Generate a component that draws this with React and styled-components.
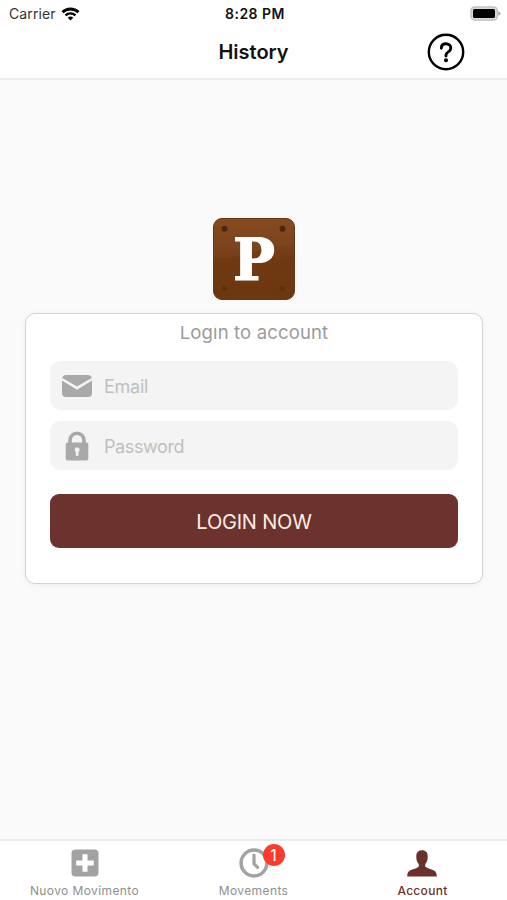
import styled, {createGlobalStyle} from 'styled-components';

const tabs = [
  {label: 'Nuovo Movimento', icon: 'plus'},
  {label: 'Movements', icon: 'clock', badge: 1},
  {label: 'Account', icon: 'person', active: true},
];

const WifiIcon = () => (
  <svg width="19" height="14" viewBox="0 0 18 14" fill="none">
    <path d="M1 5.2A11.6 11.6 0 0 1 17 5.2" stroke="#000" strokeWidth="2.8" />
    <path d="M4 8.4A7.3 7.3 0 0 1 14 8.4" stroke="#000" strokeWidth="2.3" />
    <path d="M6.2 10.8A4 4 0 0 1 11.8 10.8L9 13.6Z" fill="#000" />
  </svg>
);

const BatteryIcon = () => (
  <svg width="31" height="15" viewBox="0 0 31 15">
    <rect x="1" y="1" width="26.4" height="13" rx="4" fill="#ddd" stroke="#c2c2c2" strokeWidth="1.6" />
    <rect x="3" y="3" width="22" height="9" rx="1.6" fill="#000" />
    <path d="M28.3 5.2Q30.6 6 30.6 7.5T28.3 9.8Z" fill="#aaa" />
  </svg>
);

const HelpIcon = () => (
  <svg width="38" height="38" viewBox="0 0 38 38" fill="none">
    <circle cx="19" cy="19" r="17.2" stroke="#000" strokeWidth="2.4" />
    <path
      d="M14.3 15.2C14.3 12.3 16.3 10.8 19 10.8C21.9 10.8 23.8 12.6 23.8 15C23.8 17 22.8 17.9 21.3 18.9C19.7 20 19 20.7 19 22.1V23"
      stroke="#000"
      strokeWidth="2.9"
      strokeLinecap="round"
    />
    <circle cx="19" cy="27.3" r="2" fill="#000" />
  </svg>
);

const Logo = () => (
  <svg width="82" height="82" viewBox="0 0 82 82">
    <defs>
      <linearGradient id="wood" x1="0" y1="0" x2="0" y2="1">
        <stop offset="0" stopColor="#84481d" />
        <stop offset="0.35" stopColor="#77401b" />
        <stop offset="0.5" stopColor="#703911" />
        <stop offset="1" stopColor="#6c370f" />
      </linearGradient>
    </defs>
    <rect x="0.5" y="0.5" width="81" height="81" rx="8.5" fill="url(#wood)" stroke="#643613" />
    <path d="M1 40Q25 40 42 34T81 26V9Q81 1 73 1H9Q1 1 1 9Z" fill="#94582a" opacity="0.18" />
    <circle cx="11.5" cy="10.8" r="3" fill="#4c270d" />
    <circle cx="69.5" cy="10.8" r="3" fill="#4c270d" />
    <circle cx="11.5" cy="70.5" r="2.6" fill="#5e300e" />
    <circle cx="69.5" cy="70.5" r="2.6" fill="#5e300e" />
    <LogoLetter x="20" y="61.5" textLength="42" lengthAdjust="spacingAndGlyphs">
      P
    </LogoLetter>
  </svg>
);

const MailIcon = () => (
  <svg width="30" height="22" viewBox="0 0 30 22">
    <path d="M4 0H26Q29 0 29.7 2.6V3L15 11.4L0.3 3V2.6Q1 0 4 0Z" fill="#a9a9a9" />
    <path d="M0 5.6L15 14.8L30 5.6V18Q30 22 26 22H4Q0 22 0 18Z" fill="#a9a9a9" />
  </svg>
);

const LockIcon = () => (
  <svg width="24" height="30" viewBox="0 0 24 30">
    <path d="M5 14V9.3A7 7 0 0 1 19 9.3V14" fill="none" stroke="#a9a9a9" strokeWidth="3.6" />
    <rect x="0.7" y="11.4" width="22.6" height="18" rx="2" fill="#a9a9a9" />
    <path d="M12 16.2A2.7 2.7 0 0 1 13.5 21.1V24.7H10.8V21.1A2.7 2.7 0 0 1 12 16.2Z" fill="#f4f4f4" />
  </svg>
);

const PlusIcon = () => (
  <svg width="28" height="28" viewBox="0 0 28 28">
    <rect x="0.5" y="0.5" width="27" height="27" rx="4" fill="#a2a2a2" />
    <path d="M14 5.2V22.8M5.2 14H22.8" stroke="#fff" strokeWidth="5" />
  </svg>
);

const ClockIcon = () => (
  <svg width="30" height="30" viewBox="0 0 30 30" fill="none">
    <circle cx="15" cy="15" r="12.9" stroke="#a2a2a2" strokeWidth="3.5" />
    <path d="M15 7.2V15.8L18.6 19.4" stroke="#a2a2a2" strokeWidth="3.2" strokeLinecap="round" strokeLinejoin="round" />
  </svg>
);

const PersonIcon = () => (
  <svg width="31" height="27" viewBox="0 0 31 27">
    <path
      d="M15 0.3C18.8 0.3 20.9 2.8 20.7 6.4C20.9 9.8 19.8 12.2 18.2 14V16.4C20 18.6 24.2 18.9 27 20.5C29 21.8 29.8 23.4 29.8 26.5H0.2C0.2 23.4 1 21.8 3 20.5C5.8 18.9 10 18.6 11.8 16.4V14C10.2 12.2 9.1 9.8 9.3 6.4C9.1 2.8 11.2 0.3 15 0.3Z"
      fill="#6c302c"
    />
  </svg>
);

const icons = {plus: PlusIcon, clock: ClockIcon, person: PersonIcon};

const TabItem = ({label, icon, badge, active}) => {
  const Icon = icons[icon];

  return (
    <Tab>
      <TabIcon>
        <Icon />
        {badge && <Badge>{badge}</Badge>}
      </TabIcon>
      <TabLabel $active={active}>{label}</TabLabel>
    </Tab>
  );
};

const App = () => {
  return (
    <>
      <GlobalStyle />
      <Screen>
        <StatusBar>
          <Carrier>
            Carrier
            <WifiIcon />
          </Carrier>
          <Time>8:28 PM</Time>
          <Battery>
            <BatteryIcon />
          </Battery>
        </StatusBar>
        <Header>
          <Title>History</Title>
          <HelpButton aria-label="Help">
            <HelpIcon />
          </HelpButton>
        </Header>
        <Content>
          <Logo />
          <LoginCard>
            <CardTitle>Login to account</CardTitle>
            <Field>
              <FieldIcon>
                <MailIcon />
              </FieldIcon>
              <Input type="email" placeholder="Email" $spacing="-0.25px" />
            </Field>
            <Field>
              <FieldIcon>
                <LockIcon />
              </FieldIcon>
              <Input type="password" placeholder="Password" $spacing="-0.4px" />
            </Field>
            <LoginButton>LOGIN NOW</LoginButton>
          </LoginCard>
        </Content>
        <TabBar>
          {tabs.map((tab) => (
            <TabItem key={tab.label} {...tab} />
          ))}
        </TabBar>
      </Screen>
    </>
  );
};

const GlobalStyle = createGlobalStyle`
  * {
    box-sizing: border-box;
  }

  body {
    margin: 0;
    font-family: Inter, 'Liberation Sans', sans-serif;
  }

  h1, h2 {
    margin: 0;
  }

  button {
    padding: 0;
    border: none;
    background: none;
    font-family: inherit;
  }

  svg {
    display: block;
    flex-shrink: 0;
  }
`;

const Screen = styled.div`
  display: flex;
  flex-direction: column;
  height: 900px;
  background-color: #fafafa;
`;

const StatusBar = styled.div`
  display: grid;
  grid-template-columns: 1fr auto 1fr;
  align-items: center;
  height: 27px;
  padding: 0 6px 0 9px;
  background-color: #fff;
`;

const Carrier = styled.div`
  display: flex;
  align-items: center;
  gap: 5px;
  font-size: 14px;
  letter-spacing: 0.1px;
  color: #333;
`;

const Time = styled.div`
  font-size: 14px;
  font-weight: 600;
  letter-spacing: 0.5px;
  color: #111;
`;

const Battery = styled.div`
  display: flex;
  justify-content: flex-end;
`;

const Header = styled.header`
  display: grid;
  grid-template-columns: 1fr auto 1fr;
  align-items: center;
  height: 53px;
  padding-bottom: 1px;
  border-bottom: 2px solid #efefef;
  background-color: #fff;
`;

const Title = styled.h1`
  grid-column: 2;
  font-size: 20px;
  font-weight: 600;
  color: #111;
`;

const HelpButton = styled.button`
  justify-self: end;
  margin-right: 42px;
`;

const Content = styled.main`
  display: flex;
  flex-direction: column;
  flex: 1;
  align-items: center;
  padding: 138px 0 0 1px;
`;

const LogoLetter = styled.text`
  font-family: 'DejaVu Serif', serif;
  font-size: 57px;
  font-weight: 700;
  fill: #fff;
  stroke: #fff;
  stroke-width: 1.2px;
`;

const LoginCard = styled.section`
  display: flex;
  flex-direction: column;
  width: 458px;
  height: 271px;
  margin-top: 13px;
  padding: 12px 24px 0;
  border: 1px solid #d3d3d3;
  border-radius: 10px;
  background-color: #fff;
  box-shadow: 0 1px 6px rgba(0, 0, 0, 0.05);
`;

/* the line box is shorter than the glyphs, so the dot of the i is cut */
const CardTitle = styled.h2`
  height: 20px;
  line-height: 12px;
  margin-bottom: 15px;
  overflow: hidden;
  text-align: center;
  font-size: 18.5px;
  font-weight: 400;
  letter-spacing: 0.15px;
  color: #9b9b9b;
`;

const Field = styled.label`
  display: flex;
  align-items: center;
  height: 49px;
  margin-bottom: 11px;
  padding-left: 11px;
  border-radius: 11px;
  background-color: #f4f4f4;
`;

const FieldIcon = styled.span`
  display: flex;
  justify-content: center;
  width: 31px;
  margin-right: 12px;
`;

const Input = styled.input`
  flex: 1;
  min-width: 0;
  padding: 1px 0 0;
  border: none;
  outline: none;
  background: transparent;
  font-family: inherit;
  font-size: 18px;
  letter-spacing: ${(props) => props.$spacing};

  &::placeholder {
    color: #bfbfbf;
  }
`;

const LoginButton = styled.button`
  height: 54px;
  margin-top: 13px;
  padding-top: 1px;
  border-radius: 9px;
  font-size: 20px;
  letter-spacing: -0.2px;
  background-color: #6c332e;
  color: #fdeee4;
`;

const TabBar = styled.nav`
  display: grid;
  grid-template-columns: repeat(3, 1fr);
  height: 61px;
  border-top: 2px solid #ebebeb;
  background-color: #fff;
`;

const Tab = styled.button`
  display: flex;
  flex-direction: column;
  align-items: center;
  padding-top: 6px;
`;

const TabIcon = styled.span`
  display: flex;
  align-items: center;
  position: relative;
  height: 32px;
`;

const Badge = styled.span`
  position: absolute;
  top: -3px;
  left: 24px;
  width: 22px;
  height: 22px;
  line-height: 22px;
  border-radius: 50%;
  text-align: center;
  font-size: 16px;
  background-color: #fc3b30;
  color: #fff;
`;

const TabLabel = styled.span`
  height: 16px;
  line-height: 16px;
  margin-top: 4px;
  font-size: 12px;
  font-weight: ${(props) => (props.$active ? 500 : 400)};
  letter-spacing: ${(props) => (props.$active ? '0.3px' : '0.4px')};
  color: ${(props) => (props.$active ? '#6c302c' : '#8f8f8f')};
`;

export default App;
